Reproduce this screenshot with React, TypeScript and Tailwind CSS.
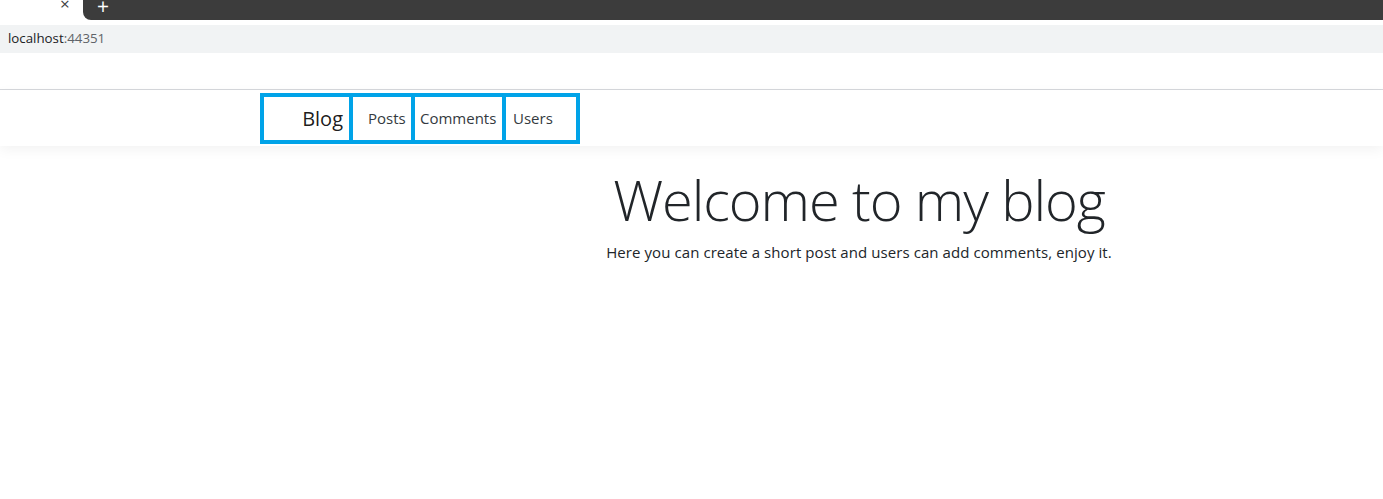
import React from 'react';

const links = [
  { label: 'Posts', className: 'w-[58px] pl-[15px]' },
  { label: 'Comments', className: 'w-[87px] pl-[5px]' },
  { label: 'Users', className: 'w-[70px] pl-[7px]' },
];

function BrowserChrome() {
  return (
    <div>
      <div className="flex h-[20px] bg-white">
        <div className="relative w-[83px] bg-white">
          <span className="absolute left-[60px] top-[-5px] text-[17px] leading-none text-[#3c4043]">×</span>
        </div>
        <div className="flex-1 rounded-bl-[8px] bg-[#3c3c3c] pl-[14px]">
          <span className="block text-[21px] leading-[12px] text-white">+</span>
        </div>
      </div>
      <div className="h-[5px] bg-white" />
      <div className="flex h-[28px] items-center bg-[#f1f3f4] pl-[8px] text-[13.3px]">
        <span className="text-[#202124]">localhost</span>
        <span className="text-[#5f6368]">:44351</span>
      </div>
      <div className="h-[36px] bg-white" />
      <div className="h-[1px] bg-[#d6d8dc]" />
    </div>
  );
}

export default function App() {
  return (
    <div className="h-[499px] w-[1383px] overflow-hidden bg-white font-['Open_Sans',sans-serif] text-[#212529]">
      <BrowserChrome />
      <header className="relative z-10 bg-white pt-[3px] pb-[2px] pl-[260px] shadow-[0_4px_12px_rgba(0,0,0,0.05)]">
        <nav className="flex h-[51px] w-[320px] gap-[4px] bg-[#00a3e8] p-[4px]">
          <a className="flex w-[85px] items-center justify-end bg-white pr-[6px] text-[20px] text-black/90">
            Blog
          </a>
          {links.map((l) => (
            <a key={l.label} className={'flex items-center bg-white text-[15px] text-[#343a40] ' + l.className}>
              {l.label}
            </a>
          ))}
        </nav>
      </header>
      <main className="pl-[335px] text-center">
        <h1 className="mt-[20px] mb-[8px] text-[56px] font-light leading-[1.2] tracking-[-1.1px]">Welcome to my blog</h1>
        <p className="text-[15px] tracking-[0.08px]">Here you can create a short post and users can add comments, enjoy it.</p>
      </main>
    </div>
  );
}
